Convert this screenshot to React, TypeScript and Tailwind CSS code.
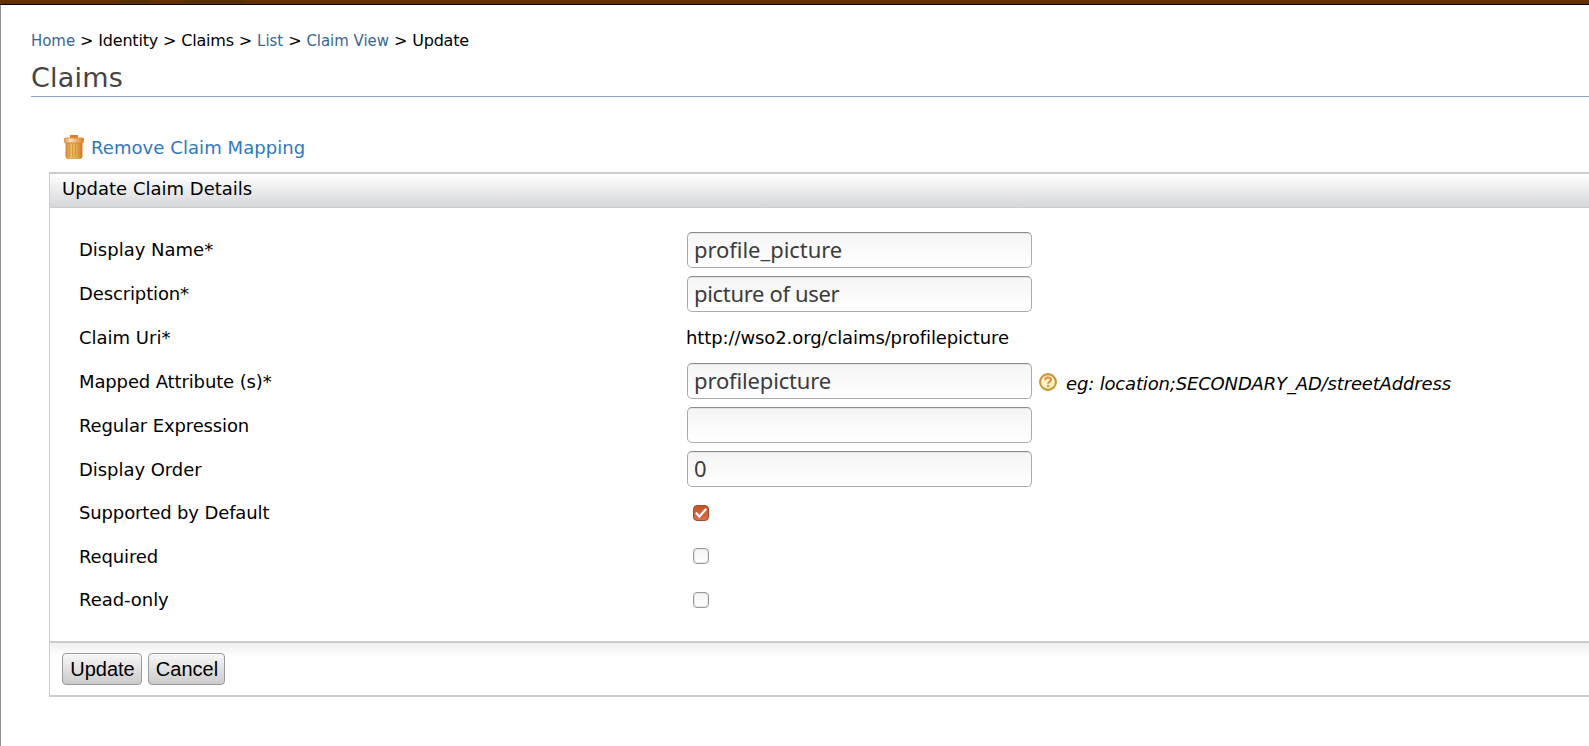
import type { ReactNode } from 'react';

const SANS = "font-['DejaVu_Sans',sans-serif]";

function Crumb({ children }: { children: ReactNode }) {
  return (
    <a className="font-['DejaVu_Sans_Condensed','DejaVu_Sans',sans-serif] text-[16.6px] tracking-normal [font-stretch:condensed] text-[#386698]">
      {children}
    </a>
  );
}

function TrashIcon() {
  return (
    <svg width="20" height="24" viewBox="0 0 20 24" className="-mt-0.5 shrink-0">
      <defs>
        <linearGradient id="can" x1="0" x2="1">
          <stop offset="0" stopColor="#d88a30" />
          <stop offset="0.3" stopColor="#eebf68" />
          <stop offset="0.75" stopColor="#e2a548" />
          <stop offset="1" stopColor="#cf7420" />
        </linearGradient>
        <linearGradient id="lid" x1="0" x2="1">
          <stop offset="0" stopColor="#e09a50" />
          <stop offset="0.3" stopColor="#fbe0bc" />
          <stop offset="1" stopColor="#e07c1c" />
        </linearGradient>
      </defs>
      <path d="M6 0h8v3.500H6z" fill="#dd8020" />
      <path d="M1.900 8h16.200v13.300q-.1 2.500-2.500 2.500H4.400q-2.400 0-2.500-2.500z" fill="url(#can)" stroke="#d48430" strokeWidth=".7" />
      <path d="M5.700 9v13M8.500 9v13M11.500 9v13M14.300 9v13" stroke="#c88628" strokeWidth="1" opacity=".6" />
      <rect x="0.4" y="3" width="19.200" height="4.800" rx=".8" fill="url(#lid)" stroke="#dc8a38" strokeWidth=".8" />
    </svg>
  );
}

function HelpIcon() {
  return (
    <svg width="18" height="18" viewBox="0 0 18 18" className="ml-[7px] shrink-0">
      <circle cx="9" cy="9" r="7.900" fill="#fdf3c4" stroke="#c39a35" strokeWidth="2.100" />
      <path d="M6.100 6.900Q6.200 4.500 9 4.500q2.900 0 2.900 2.300 0 1.200-1.400 2Q9.200 9.500 9.200 10.800" fill="none" stroke="#ee8a3c" strokeWidth="2.100" />
      <rect x="8" y="12" width="2.300" height="2.200" fill="#ee8a3c" />
    </svg>
  );
}

function Field({ value, spacing }: { value: string; spacing: string }) {
  return (
    <input
      type="text"
      defaultValue={value}
      className={`ml-px h-9 w-[345px] shrink-0 rounded-[5px] border border-[#aaa] border-t-[#8c8c8c] bg-linear-to-b from-[#f4f4f4] to-white pb-[3px] pl-[6px] font-['Noto_Sans','Open_Sans',sans-serif] text-[22px] text-[#3c3c3c] shadow-[inset_0_1px_0_#e4e4e4] outline-none ${spacing}`}
    />
  );
}

function Check({ checked = false }: { checked?: boolean }) {
  return checked ? (
    <span className="-mt-0.5 ml-[7px] flex size-4 items-center justify-center rounded-[4px] border border-[#a4492a] bg-linear-to-b from-[#c8502a] to-[#dd7048]">
      <svg width="14" height="14" viewBox="0 0 14 14">
        <path d="M2 6.800 5.300 10.600 12.200 2.800" fill="none" stroke="#fff" strokeWidth="2.200" />
      </svg>
    </span>
  ) : (
    <span className="-mt-0.5 ml-[7px] block size-4 rounded-[4px] border border-[#999] bg-linear-to-b from-[#f3f3f3] to-white shadow-[inset_0_0_0_1px_#e6e6e6]" />
  );
}

function Row({ label, children, height = 'h-11', tracking = 'tracking-[-0.13px]' }: { label: string; children: ReactNode; height?: string; tracking?: string }) {
  return (
    <div className={`flex items-center ${height}`}>
      <label className={`w-[607px] shrink-0 pb-px ${tracking}`}>{label}</label>
      {children}
    </div>
  );
}

function Button({ children, width }: { children: ReactNode; width: string }) {
  return (
    <button
      className={`h-8 rounded-[4px] border border-[#999] bg-linear-to-b from-[#f7f7f7] to-[#cbcbcb] pl-px font-['Liberation_Sans',Arial,sans-serif] text-[20px] leading-[30px] text-black shadow-[inset_0_1px_0_#fff] ${width}`}
    >
      {children}
    </button>
  );
}

export default function App() {
  return (
    <div className={`h-[746px] w-full overflow-hidden bg-white text-[18px] leading-6 text-black ${SANS}`}>
      <div className="h-[5px] border-b border-black bg-[linear-gradient(to_right,#633000_119px,#583000_119px,#583000_150px,#633000_150px,#633000_185px,#583000_185px,#583000_245px,#633000_245px)]" />
      <main className="h-[741px] border-l border-[#8f8f8f] pl-[30px]">
        <nav className="flex h-[70px] items-center gap-[5px] pt-0.5 text-[16px] tracking-[-0.2px] whitespace-nowrap">
          <Crumb>Home</Crumb>
          <span>&gt;</span>
          <span>Identity</span>
          <span>&gt;</span>
          <span>Claims</span>
          <span>&gt;</span>
          <Crumb>List</Crumb>
          <span>&gt;</span>
          <Crumb>Claim View</Crumb>
          <span>&gt;</span>
          <span>Update</span>
        </nav>
        <h1 className="-mt-[14px] h-[36px] border-b border-[#90a4cc] text-[27px] leading-[34px] tracking-[0.2px] text-[#444]">
          Claims
        </h1>
        <div className="ml-[18px]">
          <a className="mt-[38px] ml-[15px] flex h-6 items-center gap-[7px] pt-0.5 tracking-[0.07px] text-[#2f78bd]">
            <TrashIcon />
            Remove Claim Mapping
          </a>
          <section className="mt-[13px] border-y-2 border-l border-[#ccc]">
            <h2 className="h-[34px] border-b border-[#ccc] bg-linear-to-b from-white to-[#d6d7d9] pl-3 leading-[30px]">
              Update Claim Details
            </h2>
            <form className="h-[433px] pt-5 pl-[29px]">
              <Row label="Display Name*" tracking="tracking-normal"><Field value="profile_picture" spacing="tracking-[-0.05px]" /></Row>
              <Row label="Description*"><Field value="picture of user" spacing="tracking-[-0.33px]" /></Row>
              <Row label="Claim Uri*" tracking="tracking-normal">
                <span className="tracking-[-0.1px]">http://wso2.org/claims/profilepicture</span>
              </Row>
              <Row label="Mapped Attribute (s)*">
                <div className="-mt-0.5"><Field value="profilepicture" spacing="tracking-[-0.15px]" /></div>
                <HelpIcon />
                <em className="ml-[9px] pt-1 tracking-[-0.16px]">eg: location;SECONDARY_AD/streetAddress</em>
              </Row>
              <Row label="Regular Expression"><div className="-mt-0.5"><Field value="" spacing="tracking-normal" /></div></Row>
              <Row label="Display Order" tracking="tracking-[-0.05px]"><div className="-mt-0.5"><Field value="0" spacing="tracking-normal" /></div></Row>
              <Row label="Supported by Default" height="h-[43px]"><Check checked /></Row>
              <Row label="Required"><Check /></Row>
              <Row label="Read-only" height="h-[43px]" tracking="tracking-[-0.05px]"><Check /></Row>
            </form>
            <footer className="flex h-[54px] gap-1.5 border-t-2 border-[#ccc] bg-[linear-gradient(to_bottom,#efefef,#fff_14px)] pt-[10px] pl-3">
              <Button width="w-20">Update</Button>
              <Button width="w-[77px]">Cancel</Button>
            </footer>
          </section>
        </div>
      </main>
    </div>
  );
}
